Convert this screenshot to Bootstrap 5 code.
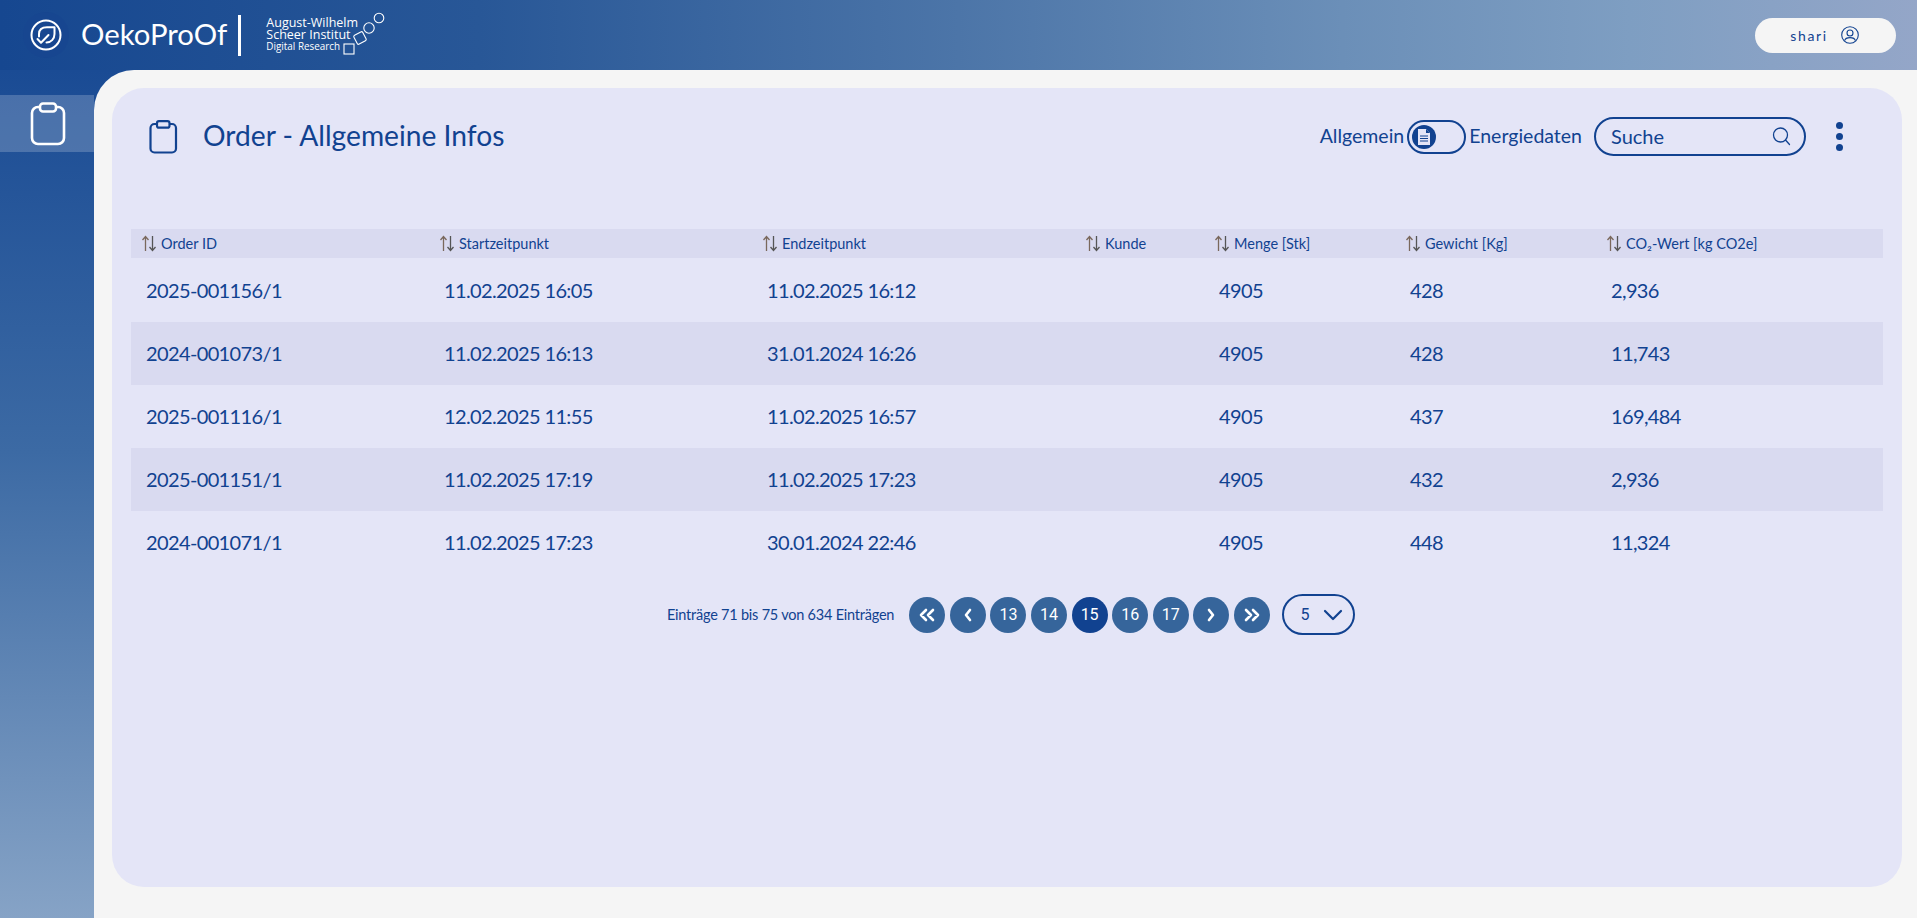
<!DOCTYPE html>
<html lang="de">
<head>
<meta charset="utf-8">
<title>OekoProOf</title>
<link href="https://cdn.jsdelivr.net/npm/bootstrap@5.3.0/dist/css/bootstrap.min.css" rel="stylesheet">
<style>
html,body{height:100%;}
body{font-family:"Lato","Liberation Sans",sans-serif;color:#114290;background:#f5f5f5;overflow:hidden;}
.app-shell{height:918px;}
.top-bar{height:70px;background:linear-gradient(90deg,#164790 0%,#285797 25%,#4c75a8 50%,#6b8fb8 70%,#7e9ec2 85%,#94a6c8 100%);padding:0 21px 0 23px;}
.logo-disc{width:46px;height:46px;border-radius:50%;background:#174690;}
.brand-name{font-size:29.3px;color:#fff;margin-left:12px;line-height:1;padding-bottom:2px;}
.brand-rule{width:3px;height:41px;background:#fff;margin:0 25px 0 11px;}
.inst-wrap{position:relative;width:130px;height:48px;color:#fff;}
.inst-wrap span{position:absolute;white-space:nowrap;line-height:1;left:0;font-family:"Open Sans",sans-serif;}
.inst-l1{top:6px;font-size:12.5px;}
.inst-l2{top:18px;font-size:12.5px;}
.inst-l3{top:31px;font-size:9.9px;}
.inst-wrap svg{position:absolute;left:76px;top:1px;}
.user-pill{width:141px;height:35px;border-radius:18px;background:#f5f5f5;font-size:14px;letter-spacing:1.6px;color:#114290;gap:13px;padding-right:2px;}
.lower-area{height:848px;background:linear-gradient(180deg,#1a4b94 0%,#3c6aa4 45%,#86a3c6 100%);}
.side-rail{width:94px;flex:none;padding-top:25px;}
.rail-item{height:57px;background:rgba(255,255,255,.2);padding-left:2px;}
.main-sheet{background:#f5f5f5;border-top-left-radius:40px;padding:18px 15px 31px 18px;}
.panel-box{height:100%;background:#e4e5f7;border-radius:32px;padding:29px 19px 0;}
.panel-head{height:39px;padding:0 17px;}
.panel-title{font-size:28.2px;font-weight:400;color:#114290;margin:0 0 2px 25px;line-height:1;}
.switch-text{font-size:19.5px;line-height:1;padding-bottom:2px;}
.switch-box{width:59px;height:34px;border:2px solid #114290;border-radius:17px;margin:0 3px;padding-left:3px;}
.switch-knob{width:24px;height:24px;border-radius:50%;background:#114290;}
.find-box{width:212px;height:39px;border:2.5px solid #114290;border-radius:20px;margin-left:12px;padding:0 13px 0 15px;font-size:20px;}
.find-box span{padding-bottom:2px;}
.dots-btn{width:7px;gap:4px;margin:0 23px 0 30px;}
.dots-btn i{width:7px;height:7px;border-radius:50%;background:#114290;display:block;}
.data-table{margin:73px 0 0;table-layout:fixed;width:1752px;--bs-table-bg:transparent;--bs-table-color:#114290;--bs-table-border-color:transparent;}
.data-table th{height:29px;padding:0 0 0 10px;font-size:14.5px;font-weight:400;background:#d9daf0;color:#114290;vertical-align:middle;border:0;white-space:nowrap;}
.data-table td{height:63px;padding:0 0 1px 15px;font-size:20px;letter-spacing:-.63px;vertical-align:middle;border:0;color:#114290;background:transparent;box-shadow:none;}
.data-table tbody tr:first-child td{height:64px;padding-bottom:0;}
.data-table tbody tr:nth-child(even) td{background:#d9daf0;}
.col-a{width:298px;}.col-b{width:323px;}.col-c{width:323px;}.col-d{width:129px;}.col-e{width:191px;}.col-f{width:201px;}
.th-inner{display:flex;align-items:center;gap:4px;}
.pager-row{margin-top:20px;height:41px;padding-left:8px;}
.pager-text{font-size:14.5px;letter-spacing:-.22px;margin-right:15px;}
.pager-dot{width:36px;height:36px;border-radius:50%;background:#36659b;color:#fff;font-family:Roboto,sans-serif;font-size:16px;margin-right:4.6px;border:0;padding:0;}
.pager-dot.is-on{background:#114290;}
.pager-size{width:73.5px;height:41px;border:2px solid #114290;border-radius:21px;margin-left:7px;padding:0 10px 0 17px;font-family:Roboto,sans-serif;font-size:16px;}
</style>
</head>
<body>
<div class="app-shell d-flex flex-column">
  <header class="top-bar d-flex align-items-center justify-content-between">
    <div class="d-flex align-items-center">
      <div class="logo-disc d-flex align-items-center justify-content-center">
        <svg width="32" height="32" viewBox="0 0 32 32" fill="none" stroke="#fff" stroke-width="2" stroke-linecap="round" stroke-linejoin="round"><circle cx="16" cy="16" r="14.5"/><path d="M9 17.5V15C9 10.5 12 8.2 17 8.2H24.5V15C24.5 20 21 23.5 16.5 23.5"/><path d="M7.5 20l3.5 3.8 7.5-7.8"/></svg>
      </div>
      <div class="brand-name">OekoProOf</div>
      <div class="brand-rule"></div>
      <div class="inst-wrap">
        <span class="inst-l1">August-Wilhelm</span>
        <span class="inst-l2">Scheer Institut</span>
        <span class="inst-l3">Digital Research</span>
        <svg width="44" height="44" viewBox="0 0 44 44" fill="none" stroke="#fff" stroke-width="1.1"><circle cx="37" cy="6" r="4.8"/><circle cx="27" cy="16" r="5.2"/><rect x="13" y="21" width="10" height="10" rx="1.5" transform="rotate(-28 18 26)"/><rect x="2" y="32" width="10" height="10"/></svg>
      </div>
    </div>
    <div class="user-pill d-flex align-items-center justify-content-center">
      <span>shari</span>
      <svg width="18" height="18" viewBox="0 0 18 18" fill="none" stroke="#114290" stroke-width="1.1"><circle cx="9" cy="9" r="8.3"/><circle cx="9" cy="7" r="3"/><path d="M3.6 14.6c.6-2.4 2.7-3 5.4-3s4.8.6 5.4 3"/></svg>
    </div>
  </header>
  <div class="lower-area d-flex flex-grow-1">
    <nav class="side-rail">
      <div class="rail-item d-flex align-items-center justify-content-center">
        <svg width="36" height="44" viewBox="0 0 36 44" fill="none" stroke="#fff" stroke-width="2.6" stroke-linejoin="round"><rect x="2" y="5" width="32" height="37" rx="6"/><rect x="10" y="1.5" width="16" height="8" rx="3" fill="#4d72a8"/></svg>
      </div>
    </nav>
    <main class="main-sheet flex-grow-1">
      <div class="panel-box">
        <div class="panel-head d-flex align-items-center">
          <svg width="30" height="34" viewBox="0 0 30 34" fill="none" stroke="#114290" stroke-width="2.2" stroke-linejoin="round"><rect x="2.5" y="4" width="25.5" height="28.5" rx="4"/><rect x="9" y="1.2" width="12.5" height="6.5" rx="2" fill="#e4e5f7"/></svg>
          <h1 class="panel-title">Order - Allgemeine Infos</h1>
          <div class="ms-auto d-flex align-items-center">
            <span class="switch-text">Allgemein</span>
            <div class="switch-box d-flex align-items-center">
              <div class="switch-knob d-flex align-items-center justify-content-center">
                <svg width="14" height="16" viewBox="0 0 14 16"><path d="M1 0h8l4 4v12H1z" fill="#e4e5f7"/><path d="M9 0v4h4z" fill="#114290"/><path d="M3 7h8M3 9.5h8M3 12h8" stroke="#114290" stroke-width="1.2"/></svg>
              </div>
            </div>
            <span class="switch-text">Energiedaten</span>
            <div class="find-box d-flex align-items-center justify-content-between">
              <span>Suche</span>
              <svg width="19" height="19" viewBox="0 0 19 19" fill="none" stroke="#114290" stroke-width="1.3" stroke-linecap="round"><circle cx="8.5" cy="8" r="7"/><path d="M13.5 13l4 4.5"/></svg>
            </div>
            <div class="dots-btn d-flex flex-column"><i></i><i></i><i></i></div>
          </div>
        </div>
        <table class="table data-table">
          <colgroup><col class="col-a"><col class="col-b"><col class="col-c"><col class="col-d"><col class="col-e"><col class="col-f"><col></colgroup>
          <thead>
            <tr>
              <th><div class="th-inner"><svg width="16" height="17" viewBox="0 0 16 17" fill="none" stroke-width="1.3"><path d="M4.5 16V1.5M1.5 5l3-3.5 3 3.5" stroke="#7a685c"/><path d="M11.5 1v14.5M8.5 12l3 3.5 3-3.5" stroke="#555"/></svg>Order ID</div></th>
              <th><div class="th-inner"><svg width="16" height="17" viewBox="0 0 16 17" fill="none" stroke-width="1.3"><path d="M4.5 16V1.5M1.5 5l3-3.5 3 3.5" stroke="#7a685c"/><path d="M11.5 1v14.5M8.5 12l3 3.5 3-3.5" stroke="#555"/></svg>Startzeitpunkt</div></th>
              <th><div class="th-inner"><svg width="16" height="17" viewBox="0 0 16 17" fill="none" stroke-width="1.3"><path d="M4.5 16V1.5M1.5 5l3-3.5 3 3.5" stroke="#7a685c"/><path d="M11.5 1v14.5M8.5 12l3 3.5 3-3.5" stroke="#555"/></svg>Endzeitpunkt</div></th>
              <th><div class="th-inner"><svg width="16" height="17" viewBox="0 0 16 17" fill="none" stroke-width="1.3"><path d="M4.5 16V1.5M1.5 5l3-3.5 3 3.5" stroke="#7a685c"/><path d="M11.5 1v14.5M8.5 12l3 3.5 3-3.5" stroke="#555"/></svg>Kunde</div></th>
              <th><div class="th-inner"><svg width="16" height="17" viewBox="0 0 16 17" fill="none" stroke-width="1.3"><path d="M4.5 16V1.5M1.5 5l3-3.5 3 3.5" stroke="#7a685c"/><path d="M11.5 1v14.5M8.5 12l3 3.5 3-3.5" stroke="#555"/></svg>Menge [Stk]</div></th>
              <th><div class="th-inner"><svg width="16" height="17" viewBox="0 0 16 17" fill="none" stroke-width="1.3"><path d="M4.5 16V1.5M1.5 5l3-3.5 3 3.5" stroke="#7a685c"/><path d="M11.5 1v14.5M8.5 12l3 3.5 3-3.5" stroke="#555"/></svg>Gewicht [Kg]</div></th>
              <th><div class="th-inner"><svg width="16" height="17" viewBox="0 0 16 17" fill="none" stroke-width="1.3"><path d="M4.5 16V1.5M1.5 5l3-3.5 3 3.5" stroke="#7a685c"/><path d="M11.5 1v14.5M8.5 12l3 3.5 3-3.5" stroke="#555"/></svg>CO₂-Wert [kg CO2e]</div></th>
            </tr>
          </thead>
          <tbody>
            <tr><td>2025-001156/1</td><td>11.02.2025 16:05</td><td>11.02.2025 16:12</td><td></td><td>4905</td><td>428</td><td>2,936</td></tr>
            <tr><td>2024-001073/1</td><td>11.02.2025 16:13</td><td>31.01.2024 16:26</td><td></td><td>4905</td><td>428</td><td>11,743</td></tr>
            <tr><td>2025-001116/1</td><td>12.02.2025 11:55</td><td>11.02.2025 16:57</td><td></td><td>4905</td><td>437</td><td>169,484</td></tr>
            <tr><td>2025-001151/1</td><td>11.02.2025 17:19</td><td>11.02.2025 17:23</td><td></td><td>4905</td><td>432</td><td>2,936</td></tr>
            <tr><td>2024-001071/1</td><td>11.02.2025 17:23</td><td>30.01.2024 22:46</td><td></td><td>4905</td><td>448</td><td>11,324</td></tr>
          </tbody>
        </table>
        <div class="pager-row d-flex align-items-center justify-content-center">
          <span class="pager-text">Einträge 71 bis 75 von 634 Einträgen</span>
          <button class="pager-dot" aria-label="Erste"><svg width="18" height="14" viewBox="0 0 18 14" fill="none" stroke="#fff" stroke-width="2.6" stroke-linecap="round" stroke-linejoin="round"><path d="M8 2L3 7l5 5M15 2l-5 5 5 5"/></svg></button>
          <button class="pager-dot" aria-label="Zurück"><svg width="10" height="14" viewBox="0 0 10 14" fill="none" stroke="#fff" stroke-width="2.6" stroke-linecap="round" stroke-linejoin="round"><path d="M7 2L3 7l4 5"/></svg></button>
          <button class="pager-dot">13</button>
          <button class="pager-dot">14</button>
          <button class="pager-dot is-on">15</button>
          <button class="pager-dot">16</button>
          <button class="pager-dot">17</button>
          <button class="pager-dot" aria-label="Weiter"><svg width="10" height="14" viewBox="0 0 10 14" fill="none" stroke="#fff" stroke-width="2.6" stroke-linecap="round" stroke-linejoin="round"><path d="M3 2l4 5-4 5"/></svg></button>
          <button class="pager-dot" aria-label="Letzte"><svg width="18" height="14" viewBox="0 0 18 14" fill="none" stroke="#fff" stroke-width="2.6" stroke-linecap="round" stroke-linejoin="round"><path d="M3 2l5 5-5 5M10 2l5 5-5 5"/></svg></button>
          <div class="pager-size d-flex align-items-center justify-content-between">
            <span>5</span>
            <svg width="20" height="12" viewBox="0 0 20 12" fill="none" stroke="#114290" stroke-width="2.2" stroke-linecap="round" stroke-linejoin="round"><path d="M2 2l8 8 8-8"/></svg>
          </div>
        </div>
      </div>
    </main>
  </div>
</div>
<script src="https://cdn.jsdelivr.net/npm/bootstrap@5.3.0/dist/js/bootstrap.bundle.min.js"></script>
</body>
</html>
